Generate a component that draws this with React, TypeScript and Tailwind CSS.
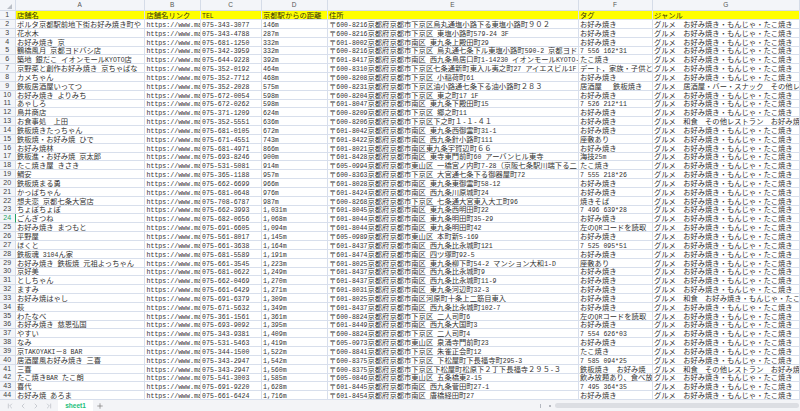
import React from "react";
import { ChevronFirst, ChevronLast, ChevronLeft, ChevronRight, Plus } from "lucide-react";

const cjk = '"Noto Sans CJK JP", "Liberation Sans", sans-serif';
const okonomi = "お好み焼き";
const monja = "グルメ　お好み焼き・もんじゃ・たこ焼き";
const washoku = "グルメ　和食　その他レストラン　お好み焼";
const kyoto = "京都府京都市";

// [name, tel, distance, address, tag, genre]
const rows: string[][] = [
  ["ポルタ京都駅前地下街お好み焼き町や", "075-343-3077", "146m", "〒600-8216" + kyoto + "下京区烏丸通塩小路下る東塩小路町９０２", okonomi, monja],
  ["花水木", "075-343-4788", "287m", "〒600-8216" + kyoto + "下京区 東塩小路町579-24 3F", okonomi, monja],
  ["お好み焼き 京", "075-681-1250", "332m", "〒601-8002" + kyoto + "南区 東九条上殿田町29", okonomi, monja],
  ["鶴橋風月 京都ヨドバシ店", "075-342-3959", "332m", "〒600-8216" + kyoto + "下京区 烏丸通七条下ル東塩小路町590-2 京都ヨド", "7 556 162*31", monja],
  ["築地 銀だこ イオンモールKYOTO店", "075-644-9228", "392m", "〒601-8417" + kyoto + "南区 西九条鳥居口町1-14230 イオンモールKYOTO-", "たこ焼き", monja],
  ["京野菜と創作お好み焼き 京ちゃばな", "075-352-0192", "464m", "〒600-8310" + kyoto + "下京区七条通新町東入ル夷之町27 アイエスビル1F", "デート，家族・子供と", monja],
  ["カメちゃん", "075-352-7712", "468m", "〒600-8208" + kyoto + "下京区 小稲荷町61", okonomi, monja],
  ["鉄板居酒屋いってつ", "075-352-2028", "575m", "〒600-8231" + kyoto + "下京区油小路通七条下る油小路町２８３", "居酒屋　 鉄板焼き", "グルメ　居酒屋・バー・スナック　その他レ"],
  ["お好み焼き よりみち", "075-672-0054", "598m", "〒600-8204" + kyoto + "下京区 東之町17 1F", okonomi, monja],
  ["あゃしろ", "075-672-0262", "598m", "〒601-8047" + kyoto + "南区 東九条下殿田町15", "7 526 212*11", monja],
  ["鳥井商店", "075-371-1209", "624m", "〒600-8209" + kyoto + "下京区 郷之町11", okonomi, monja],
  ["お食事処　上田", "075-352-5551", "636m", "〒600-8206" + kyoto + "下京区下之町１-１-４１", okonomi, washoku],
  ["鉄板焼きたっちゃん", "075-681-0105", "672m", "〒601-8042" + kyoto + "南区 東九条西御霊町31-1", okonomi, monja],
  ["鉄板焼・お好み焼 ひで", "075-671-4551", "743m", "〒601-8422" + kyoto + "南区 西九条針小路町111", "座敷あり", monja],
  ["お好み焼林", "075-681-4971", "866m", "〒601-8021" + kyoto + "南区東九条宇賀辺町６６", okonomi, monja],
  ["鉄板進・お好み焼 京太郎", "075-693-8246", "900m", "〒601-8428" + kyoto + "南区 東寺東門前町60 アーバンヒル東寺", "海技25m", monja],
  ["たこ焼き屋 きさき", "075-531-5081", "914m", "〒605-0994" + kyoto + "東山区 一橋宮ノ内町7-28（京阪七条駅川端下る二", "たこ焼き", monja],
  ["鯛安", "075-365-1188", "957m", "〒600-8363" + kyoto + "下京区 大宮通七条下る御器屋町72", "7 555 218*26", monja],
  ["鉄板焼まる勇", "075-662-6699", "966m", "〒601-8028" + kyoto + "南区 東九条東御霊町58-12", okonomi, monja],
  ["かっぱちゃん", "075-681-0648", "976m", "〒601-8424" + kyoto + "南区 西九条川原城町24", okonomi, monja],
  ["想夫恋 京都七条大宮店", "075-708-6787", "987m", "〒600-8268" + kyoto + "下京区 七条通大宮東入大工町96", "焼きそば", monja],
  ["ちょぼちょぼ", "075-662-3993", "1,031m", "〒601-8045" + kyoto + "南区 東九条西明田町22", "7 496 639*28", monja],
  ["ごんぎつね", "075-682-0656", "1,068m", "〒601-8044" + kyoto + "南区 東九条明田町35-29", okonomi, monja],
  ["お好み焼き まつもと", "075-691-6605", "1,094m", "〒601-8044" + kyoto + "南区 東九条明田町42", "左のQRコードを読取", monja],
  ["平野屋", "075-561-8017", "1,145m", "〒605-0989" + kyoto + "東山区 本町新5-169", okonomi, monja],
  ["ほくと", "075-661-3638", "1,164m", "〒601-8437" + kyoto + "南区 西九条比永城町121", "7 525 095*51", monja],
  ["鉄板魂 3104ん家", "075-681-5589", "1,191m", "〒601-8474" + kyoto + "南区 四ツ塚町92-5", okonomi, monja],
  ["お好み焼き 鉄板焼 元祖よっちゃん", "075-661-3545", "1,223m", "〒601-8025" + kyoto + "南区 東九条柳下町54-2 マンション大和1-D", "座敷あり", monja],
  ["京好美", "075-681-0622", "1,249m", "〒601-8437" + kyoto + "南区 西九条比永城町9", okonomi, monja],
  ["としちゃん", "075-662-0469", "1,270m", "〒601-8437" + kyoto + "南区 西九条比永城町11-9", okonomi, monja],
  ["ますみ", "075-661-6429", "1,271m", "〒601-8031" + kyoto + "南区 東九条河辺町32-3", okonomi, monja],
  ["お好み焼はゃし", "075-691-6379", "1,309m", "〒601-8025" + kyoto + "南区河原町十条上二筋目東入", okonomi, "グルメ　和食　お好み焼き・もんじゃ・たこ"],
  ["萩", "075-671-5632", "1,349m", "〒601-8437" + kyoto + "南区 西九条比永城町102-7", okonomi, monja],
  ["わたなべ", "075-361-1561", "1,361m", "〒600-8824" + kyoto + "下京区 二人司町6", "左のQRコードを読取", monja],
  ["お好み焼き 慈恩弘国", "075-693-9092", "1,395m", "〒601-8449" + kyoto + "南区 西九条大国町3", okonomi, monja],
  ["やすい", "075-343-9381", "1,409m", "〒600-8824" + kyoto + "下京区 二人司町4", "7 554 626*03", monja],
  ["なみ", "075-531-5463", "1,419m", "〒605-0973" + kyoto + "東山区 泉涌寺門前町23", okonomi, monja],
  ["京TAKOYAKI－8 BAR", "075-344-1500", "1,522m", "〒600-8841" + kyoto + "下京区 朱雀正会町12", "たこ焼き", monja],
  ["居酒屋風お好み焼き 三喜", "075-343-2947", "1,542m", "〒600-8375" + kyoto + "下京区 下松屋町下長福寺町295-3", "7 585 094*25", monja],
  ["三喜", "075-343-2947", "1,560m", "〒600-8375" + kyoto + "下京区下松屋町松原下２丁下長福寺２９５-３", "鉄板焼き　お好み焼", washoku],
  ["たこ焼きBAR たこ朗", "075-541-3003", "1,585m", "〒605-0846" + kyoto + "東山区 五条橋東2-15", "飲み放題あり、食べ放", monja],
  ["喜代", "075-691-9220", "1,628m", "〒601-8445" + kyoto + "南区 西九条菅田町27-1", "7 495 364*35", monja],
  ["お好み焼 あろま", "075-661-6424", "1,716m", "〒601-8454" + kyoto + "南区 唐橋経田町27", okonomi, monja],
];

const gridCols = "grid grid-cols-[15.5px_129.5px_55.5px_61px_66px_251px_74px_1fr]";

// ascii runs are set in the smaller mono face, like the half width glyphs of the original font
const Runs = ({ text }: { text: string }) => (
  <>
    {text.split(/([\x20-\x7e]+)/).map((part, i) =>
      /^[\x20-\x7e]+$/.test(part) ? (
        <span key={i} className="font-['Liberation_Mono'] text-[6.5px]">
          {part}
        </span>
      ) : (
        <span key={i}>{part}</span>
      )
    )}
  </>
);

const Cell = ({ text, mono, header }: { text: string; mono?: boolean; header?: boolean }) => (
  <div
    className={`overflow-hidden whitespace-pre border-r border-b border-[#d8dfec] pl-[1.5px] leading-[8px] text-[7.3px] ${
      header ? "bg-[#ffff00] text-[#33330c]" : "text-[#333]"
    }`}
    style={{ fontFamily: cjk }}
  >
    {mono ? <span className="font-['Liberation_Mono'] text-[6.6px]">{text}</span> : <Runs text={text} />}
  </div>
);

const RowNum = ({ n, active }: { n: number; active?: boolean }) => (
  <div
    className={`border-r border-b bg-[#f3f5f9] text-center font-['Liberation_Sans'] text-[7px] leading-[8px] ${
      active ? "border-r-[#21a366] border-b-[#d5dce8] text-[#21a366]" : "border-[#d5dce8] text-[#444]"
    }`}
  >
    {n}
  </div>
);

const ColHead = ({ label }: { label: string }) => (
  <div className="flex items-center justify-center border-r border-b border-[#d5dce8] bg-[#f3f5f9] font-['Liberation_Sans'] text-[6.5px] text-[#555]">
    {label}
  </div>
);

export default function App() {
  return (
    <div className="flex h-[411px] w-[800px] flex-col overflow-hidden bg-white">
      <div className={`${gridCols} h-[11px] shrink-0`}>
        <div className="relative border-r border-b border-[#d5dce8] bg-[#f3f5f9]">
          <svg className="absolute right-[3px] bottom-[1px]" width="5" height="5" viewBox="0 0 5 5">
            <path d="M5 0V5H0Z" fill="#b9bec6" />
          </svg>
        </div>
        {["A", "B", "C", "D", "E", "F", "G"].map((c) => (
          <ColHead key={c} label={c} />
        ))}
      </div>

      <div className="grid min-h-0 flex-1 grid-rows-[repeat(44,minmax(0,1fr))]">
        <div className={gridCols}>
          <RowNum n={1} />
          {["店舗名", "店舗名リンク", "TEL", "京都駅からの距離", "住所", "タグ", "ジャンル"].map((h) => (
            <Cell key={h} text={h} header />
          ))}
        </div>
        {rows.map((r, i) => (
          <div key={i} className={gridCols}>
            <RowNum n={i + 2} active={i + 2 === 24} />
            <Cell text={r[0]} />
            <Cell text="https://www.ma" mono />
            <Cell text={r[1]} mono />
            <Cell text={r[2]} mono />
            <Cell text={r[3]} />
            <Cell text={r[4]} />
            <Cell text={r[5]} />
          </div>
        ))}
      </div>

      <div className="flex h-[11px] shrink-0 items-center bg-[#f3f4f7]">
        <div className="flex w-[58px] items-center pl-[6px] text-[#b4b8c0]">
          <ChevronFirst size={8} className="mr-[5px]" />
          <ChevronLeft size={8} className="mr-[5px]" />
          <ChevronRight size={8} className="mr-[5px]" />
          <ChevronLast size={8} />
        </div>
        <div className="flex h-full w-[35px] items-center justify-center bg-white font-['Liberation_Sans'] text-[6.5px] font-bold text-[#21c07a]">
          sheet1
        </div>
        <Plus size={8} className="ml-[3px] text-[#777]" />
        <div className="ml-auto h-[4px] w-px bg-[#b4b8c0]" />
        <div className="ml-[8px] h-[2px] w-[2px] rounded-full bg-[#a0a4ac]" />
        <div className="ml-[4px] mr-[1px] h-[5px] w-[244px] rounded-full bg-[#dcdee3]" />
      </div>
    </div>
  );
}
